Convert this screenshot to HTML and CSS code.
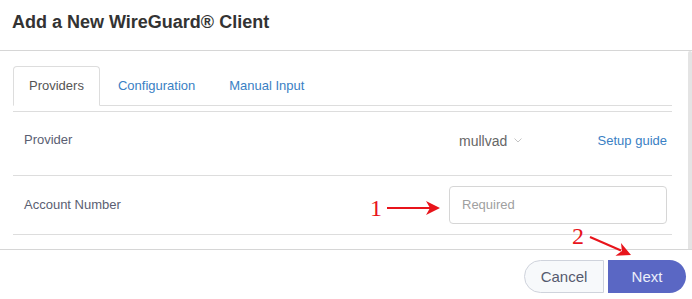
FILE: index.html
```html
<!DOCTYPE html>
<html lang="en">
<head>
<meta charset="utf-8">
<title>Add a New WireGuard Client</title>
<link rel="stylesheet" href="styles.css">
</head>
<body>
<div class="modal">
  <header class="modal-header">
    <h1 class="title">Add a New WireGuard® Client</h1>
  </header>
  <div class="modal-body">
    <div class="body-content">
      <ul class="tabs">
        <li class="tab active">Providers</li>
        <li class="tab">Configuration</li>
        <li class="tab">Manual Input</li>
      </ul>
      <div class="table">
        <div class="row row-first">
          <span class="label">Provider</span>
          <div class="control provider-control">
            <span class="select">mullvad
              <svg class="chev" width="8" height="5" viewBox="0 0 8 5"><path d="M0.5 0.5 L4 4 L7.5 0.5" fill="none" stroke="#c4c4c4" stroke-width="1"/></svg>
            </span>
            <a class="link" href="#">Setup guide</a>
          </div>
        </div>
        <div class="row">
          <span class="label">Account Number</span>
          <div class="control">
            <input class="input" type="text" placeholder="Required">
          </div>
        </div>
      </div>
    </div>
    <div class="scrollbar"></div>
  </div>
  <footer class="modal-footer">
    <div class="btn-group">
      <button class="btn cancel">Cancel</button>
      <button class="btn next">Next</button>
    </div>
  </footer>
</div>
<div class="annot">
  <svg class="arrows" width="692" height="299" viewBox="0 0 692 299">
    <line x1="387" y1="208" x2="430" y2="208" stroke="#e8141b" stroke-width="2"/>
    <polygon points="426,201 440,208 426,215 430,208" fill="#e8141b"/>
    <line x1="590" y1="237" x2="621" y2="250.5" stroke="#e8141b" stroke-width="2"/>
    <polygon points="621,243 631,255 615.4,255.8 621.9,251" fill="#e8141b"/>
  </svg>
  <span class="num num-1">1</span>
  <span class="num num-2">2</span>
</div>
</body>
</html>
```

FILE: styles.css
```css
* { box-sizing: border-box; }

body {
  margin: 0;
  font-family: "Liberation Sans", Arial, sans-serif;
  background: #fff;
  position: relative;
  width: 692px;
  height: 299px;
  overflow: hidden;
}

.modal {
  width: 692px;
  height: 299px;
  display: flex;
  flex-direction: column;
}

.modal-header {
  height: 51px;
  border-bottom: 1px solid #d6d6d6;
  padding: 10px 12px 0;
}

.title {
  margin: 0;
  font-size: 18px;
  line-height: 24px;
  font-weight: bold;
  color: #333;
}

.modal-body {
  height: 198px;
  display: flex;
}

.body-content {
  flex: 1;
  padding: 15px 16px 0 13px;
}

.scrollbar {
  width: 4px;
  background: #e4e4e4;
  border-radius: 2px 2px 0 0;
}

.tabs {
  list-style: none;
  margin: 0;
  padding: 0;
  display: flex;
  border-bottom: 1px solid #ddd;
}

.tab {
  height: 40px;
  margin: 0 2px -1px 0;
  padding: 0 15px 1px;
  border: 1px solid transparent;
  border-radius: 4px 4px 0 0;
  display: flex;
  align-items: center;
  font-size: 13px;
  color: #3a80c4;
}

.tab.active {
  border-color: #ddd #ddd #fff;
  color: #555;
  background: #fff;
}

.table {
  margin-top: 5px;
  border-top: 1px solid #ddd;
}

.row {
  display: flex;
  align-items: center;
  justify-content: space-between;
  border-bottom: 1px solid #ddd;
  padding: 0 5px 0 11px;
  height: 59px;
}

.row-first {
  height: 64px;
  padding-bottom: 6px;
}

.label {
  font-size: 13px;
  color: #5a5e72;
  padding-bottom: 2px;
}

.control {
  width: 218px;
}

.provider-control {
  display: flex;
  justify-content: space-between;
  align-items: center;
  padding-left: 10px;
}

.select {
  font-size: 14px;
  color: #666;
  display: flex;
  align-items: center;
  gap: 7px;
}

.link {
  font-size: 13px;
  color: #3a80c4;
  text-decoration: none;
}

.input {
  display: block;
  width: 218px;
  height: 38px;
  border: 1px solid #d6d6d6;
  border-radius: 4px;
  padding: 0 12px 1px;
  font-size: 13px;
  font-family: inherit;
  color: #333;
  outline: none;
}

.input::placeholder {
  color: #a0a0a0;
}

.modal-footer {
  flex: 1;
  border-top: 1px solid #d6d6d6;
  display: flex;
  justify-content: flex-end;
  align-items: flex-start;
  padding: 10px 6px 0 0;
}

.btn-group {
  display: flex;
  gap: 4px;
}

.btn {
  height: 33px;
  font-family: inherit;
  font-size: 15px;
  border: none;
  padding: 0;
  cursor: pointer;
}

.cancel {
  width: 80px;
  border: 1px solid #cfd3dc;
  border-radius: 17px 0 0 17px;
  background: #f7f9fb;
  color: #555a6e;
}

.next {
  width: 78px;
  background: #5a67c4;
  color: #eceefa;
  border-radius: 0 17px 17px 0;
}

.annot {
  position: absolute;
  left: 0;
  top: 0;
  width: 692px;
  height: 299px;
  pointer-events: none;
}

.arrows {
  position: absolute;
  left: 0;
  top: 0;
}

.num {
  position: absolute;
  font-family: "Liberation Serif", "Times New Roman", serif;
  font-size: 24px;
  line-height: 24px;
  color: #e8141b;
}

.num-1 { left: 370px; top: 196px; }
.num-2 { left: 572px; top: 224px; }
```
